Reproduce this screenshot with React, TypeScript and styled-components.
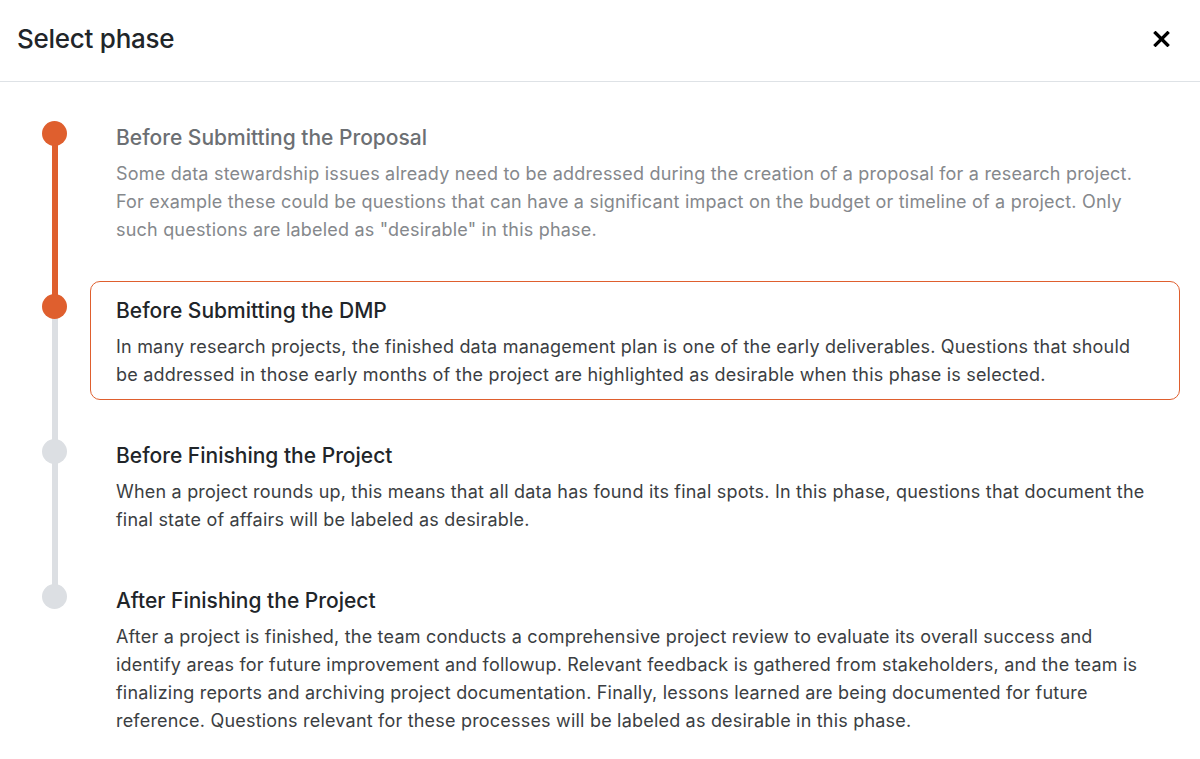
import React from 'react';
import styled, { createGlobalStyle } from 'styled-components';

const GlobalStyle = createGlobalStyle`
  html, body {
    margin: 0;
    padding: 0;
    background: #ffffff;
  }
  body {
    font-family: Inter, "Noto Sans", "Liberation Sans", sans-serif;
    color: #212529;
  }
`;

type Phase = {
  title: string;
  lines: string[];
  state: 'past' | 'current' | 'future';
};

const phases: Phase[] = [
  {
    title: 'Before Submitting the Proposal',
    state: 'past',
    lines: [
      'Some data stewardship issues already need to be addressed during the creation of a proposal for a research project.',
      'For example these could be questions that can have a significant impact on the budget or timeline of a project. Only',
      'such questions are labeled as "desirable" in this phase.',
    ],
  },
  {
    title: 'Before Submitting the DMP',
    state: 'current',
    lines: [
      'In many research projects, the finished data management plan is one of the early deliverables. Questions that should',
      'be addressed in those early months of the project are highlighted as desirable when this phase is selected.',
    ],
  },
  {
    title: 'Before Finishing the Project',
    state: 'future',
    lines: [
      'When a project rounds up, this means that all data has found its final spots. In this phase, questions that document the',
      'final state of affairs will be labeled as desirable.',
    ],
  },
  {
    title: 'After Finishing the Project',
    state: 'future',
    lines: [
      'After a project is finished, the team conducts a comprehensive project review to evaluate its overall success and',
      'identify areas for future improvement and followup. Relevant feedback is gathered from stakeholders, and the team is',
      'finalizing reports and archiving project documentation. Finally, lessons learned are being documented for future',
      'reference. Questions relevant for these processes will be labeled as desirable in this phase.',
    ],
  },
];

const ORANGE = '#df5f2e';
const GRAY = '#dcdfe3';

const App = () => (
  <>
    <GlobalStyle />
    <Modal>
      <Header>
        <Title>Select phase</Title>
        <CloseButton aria-label='Close'>
          <svg width='17' height='16' viewBox='0 0 17 16'>
            <path d='M2.5 2 L14.5 14 M14.5 2 L2.5 14' stroke='#000' strokeWidth='3.3' strokeLinecap='square' />
          </svg>
        </CloseButton>
      </Header>
      <Body>
        {phases.map((phase, i) => {
          const reached = phase.state !== 'future';
          const nextReached = i < phases.length - 1 && phases[i + 1].state !== 'future';
          return (
            <Item key={phase.title} $last={i === phases.length - 1}>
              <Rail>
                <Segment $color={i === 0 ? 'transparent' : reached ? ORANGE : GRAY} $fixed />
                <Dot $color={reached ? ORANGE : GRAY} />
                {i < phases.length - 1 && <Segment $color={nextReached ? ORANGE : GRAY} />}
              </Rail>
              <Card $selected={phase.state === 'current'}>
                <PhaseTitle $faded={phase.state === 'past'}>{phase.title}</PhaseTitle>
                <Description $faded={phase.state === 'past'}>
                  {phase.lines.map((line) => (
                    <Line key={line}>{line}</Line>
                  ))}
                </Description>
              </Card>
            </Item>
          );
        })}
      </Body>
    </Modal>
  </>
);

export default App;

const Modal = styled.div`
  width: 1200px;
  min-height: 759px;
  background: #ffffff;
`;

const Header = styled.div`
  height: 82px;
  display: flex;
  align-items: center;
  justify-content: space-between;
  padding: 0 26px 0 17px;
  border-bottom: 1.5px solid #dee2e6;
  box-sizing: border-box;
`;

const Title = styled.h5`
  margin: 0;
  font-size: 26px;
  font-weight: 500;
  letter-spacing: -0.01em;
  color: #212529;
  margin-top: -4px;
`;

const CloseButton = styled.button`
  width: 26px;
  height: 26px;
  padding: 0;
  border: 0;
  background: transparent;
  display: flex;
  align-items: center;
  justify-content: center;
  cursor: pointer;
  margin-top: -4px;
`;

const Body = styled.div`
  padding: 26px 20px 20px 42px;
  display: flex;
  flex-direction: column;
`;

const Item = styled.div<{ $last: boolean }>`
  display: flex;
  flex-direction: row;
  gap: 23px;
  padding-bottom: ${(p) => (p.$last ? '0' : '26px')};
  margin-bottom: ${(p) => (p.$last ? '0' : '-26px')};
  & + & {
    margin-top: 26px;
  }
`;

const Rail = styled.div`
  width: 25px;
  flex-shrink: 0;
  display: flex;
  flex-direction: column;
  align-items: center;
  margin-bottom: -26px;
`;

const Segment = styled.div<{ $color: string; $fixed?: boolean }>`
  width: 6px;
  background: ${(p) => p.$color};
  ${(p) => (p.$fixed ? 'height: 14px; margin-bottom: -1px;' : 'flex: 1; margin-top: -1px;')}
`;

const Dot = styled.div<{ $color: string }>`
  width: 25px;
  height: 25px;
  border-radius: 50%;
  background: ${(p) => p.$color};
  flex-shrink: 0;
  position: relative;
  z-index: 1;
`;

const Card = styled.div<{ $selected: boolean }>`
  flex: 1;
  border: 1.5px solid ${(p) => (p.$selected ? ORANGE : 'transparent')};
  border-radius: 10px;
  padding: 15px 25px 10px;
`;

const PhaseTitle = styled.div<{ $faded: boolean }>`
  font-size: 21px;
  line-height: 28px;
  font-weight: 500;
  color: ${(p) => (p.$faded ? '#6c6f73' : '#212529')};
  margin-bottom: 8px;
`;

const Description = styled.div<{ $faded: boolean }>`
  font-size: 18px;
  line-height: 28px;
  letter-spacing: 0.2px;
  color: ${(p) => (p.$faded ? '#85888c' : '#3b3e42')};
`;

const Line = styled.span`
  display: block;
  white-space: nowrap;
`;
